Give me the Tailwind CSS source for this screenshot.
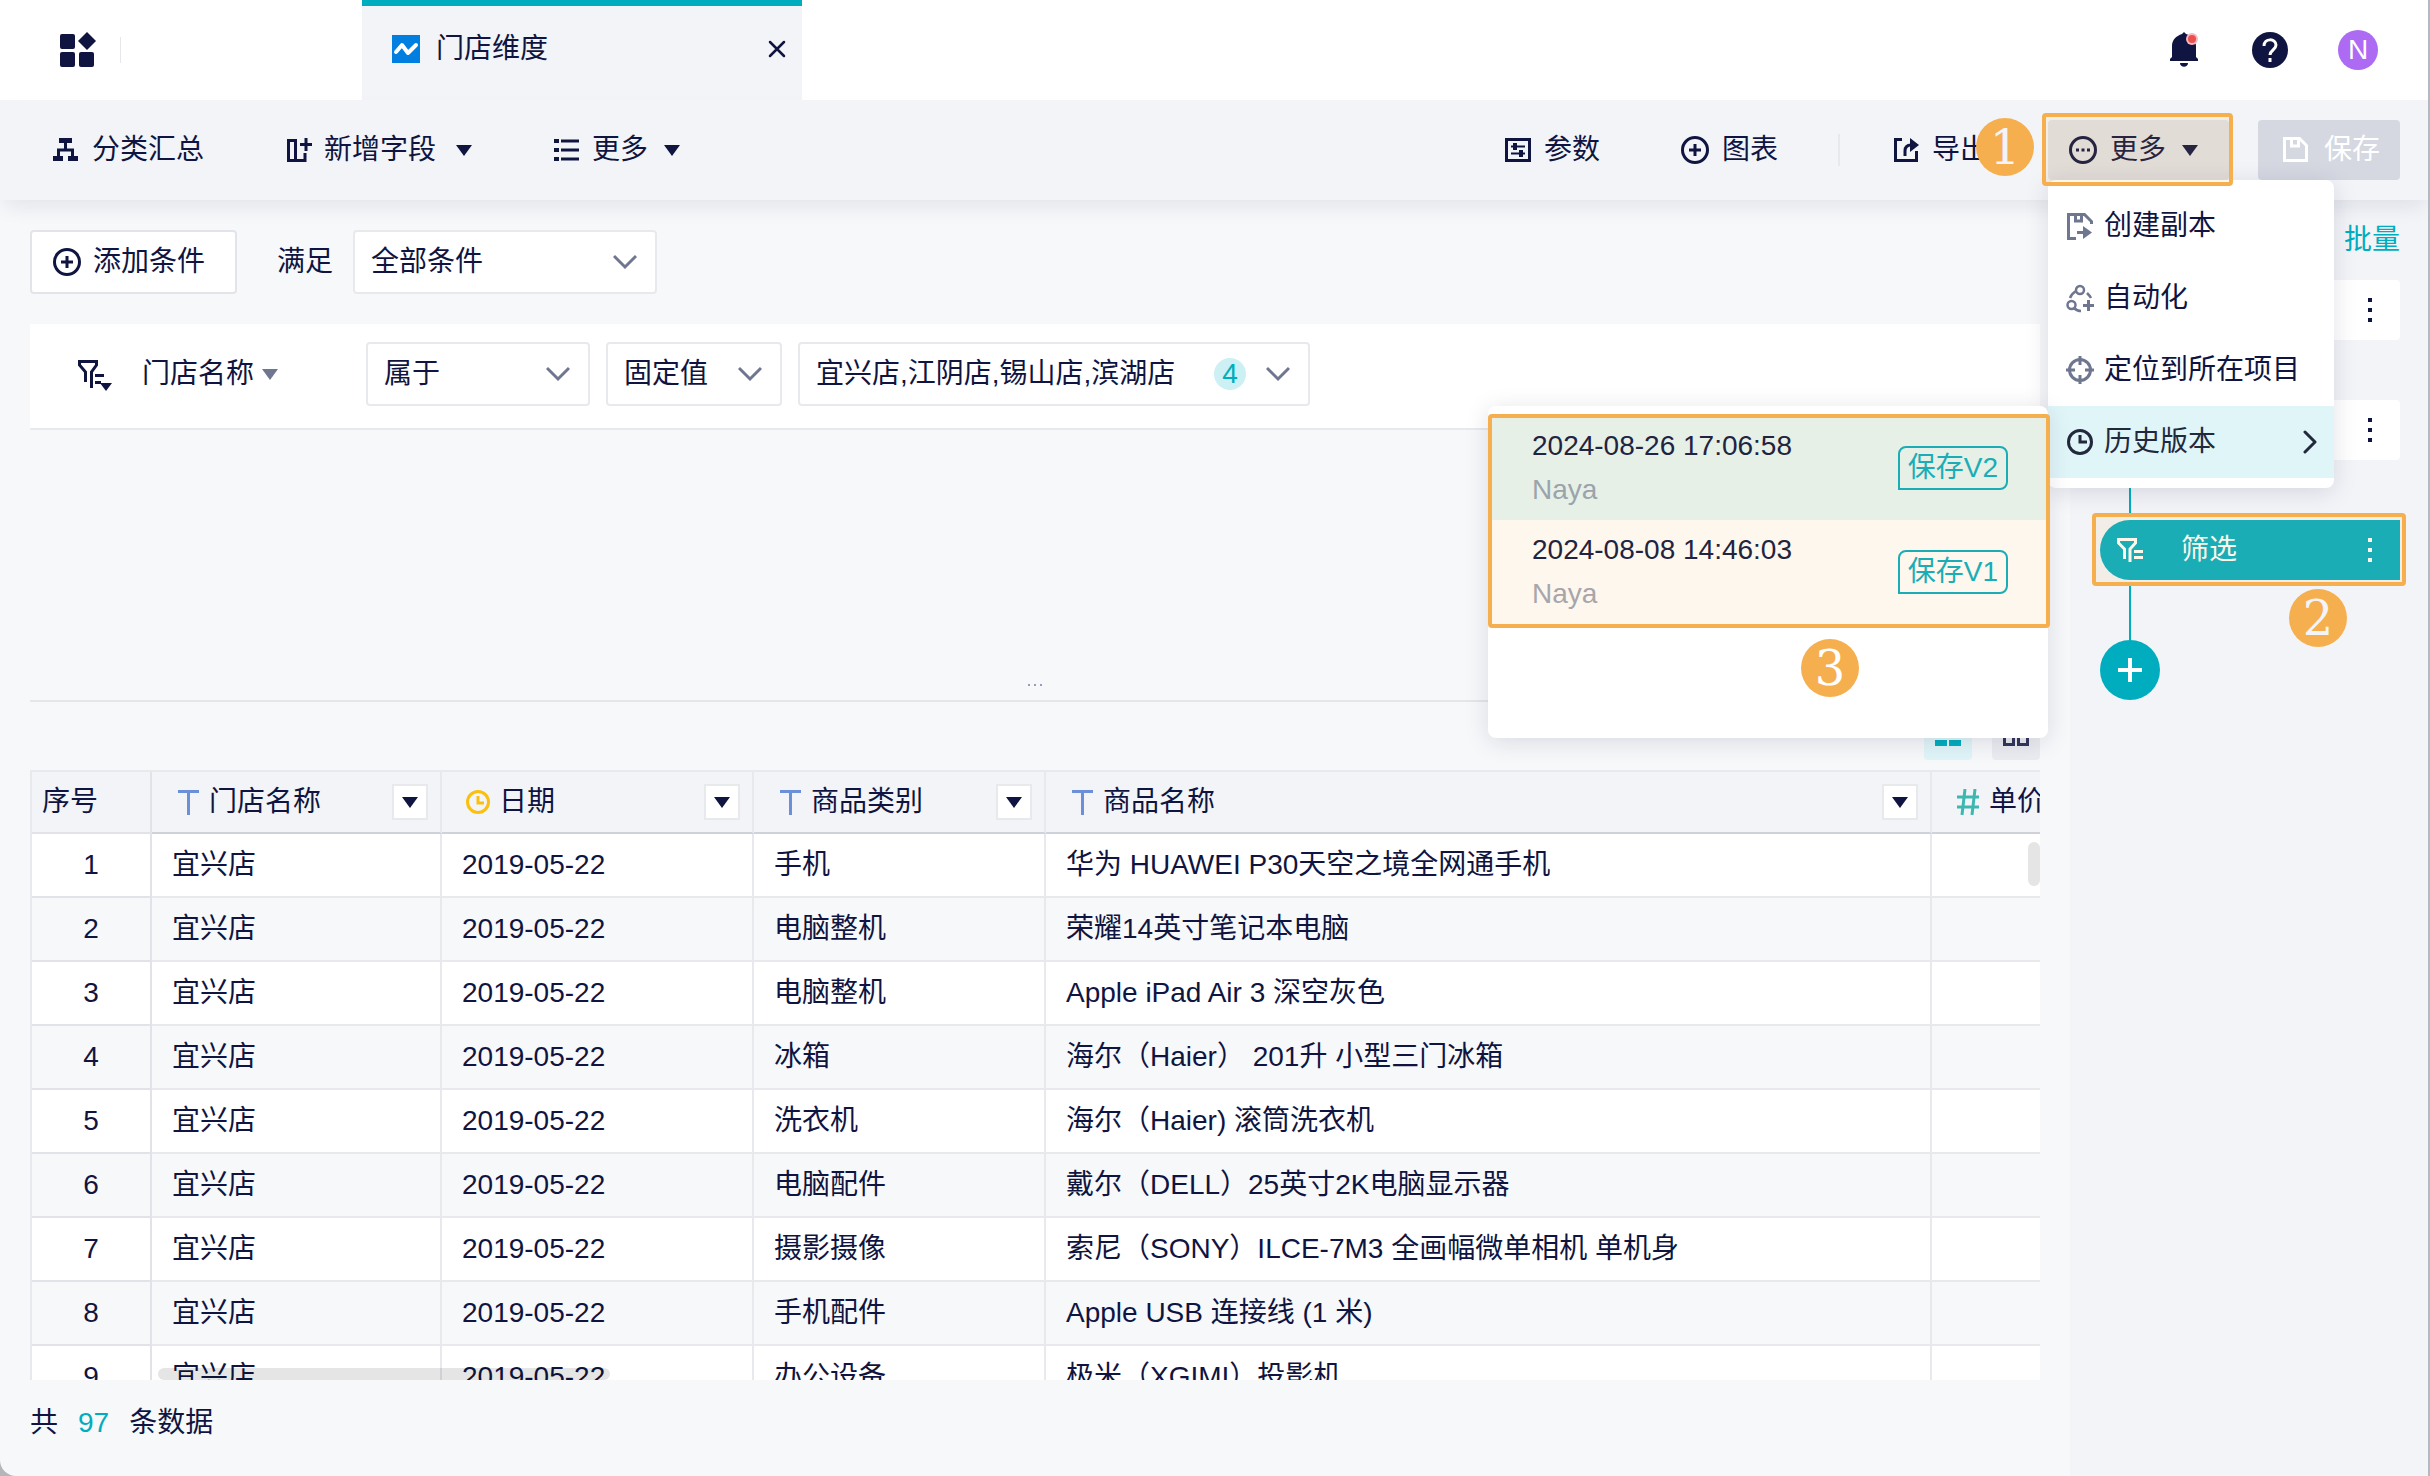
<!DOCTYPE html>
<html lang="zh-CN">
<head>
  <meta charset="UTF-8">
  <meta name="viewport" content="width=device-width, initial-scale=1.0">
  <title>门店维度</title>
  <script src="https://cdn.jsdelivr.net/npm/@tailwindcss/browser@4"></script>
</head>
<body class="bg-[#b4b6ba]">
<div class="h-screen flex flex-col overflow-hidden rounded-bl-2xl border-r-2 border-[#b4b8c0] bg-[#f7f8fa] font-['Liberation_Sans','Noto_Sans_CJK_SC',sans-serif] text-[28px] leading-10 text-[#0f1540]">

  <!-- top bar -->
  <header class="flex h-[100px] shrink-0 bg-white">
    <div class="flex w-[362px] items-center pl-[60px]">
      <button aria-label="应用">
        <svg class="h-9 w-9" viewBox="0 0 36 36" fill="currentColor">
          <rect x="0" y="2" width="15" height="15" rx="2"/>
          <rect x="0" y="20" width="15" height="15" rx="2"/>
          <rect x="19" y="20" width="15" height="15" rx="2"/>
          <path d="M27 0l9 9-9 9-9-9z"/>
        </svg>
      </button>
      <span class="ml-6 h-[26px] w-px bg-[#e6e7ea]"></span>
    </div>
    <div class="flex w-[440px] items-center border-t-[6px] border-[#00adbe] bg-[#f2f4f8] pr-4 pl-[30px] pb-2">
      <svg class="h-7 w-7" viewBox="0 0 28 28">
        <rect width="28" height="28" fill="#007fe0"/>
        <path d="M4 17l6-7 6 8 8-8" fill="none" stroke="#fff" stroke-width="4" stroke-linecap="round" stroke-linejoin="round"/>
      </svg>
      <span class="ml-4 flex-1">门店维度</span>
      <button aria-label="关闭">
        <svg class="h-[18px] w-[18px]" viewBox="0 0 18 18" fill="none" stroke="currentColor" stroke-width="2.500" stroke-linecap="round"><path d="M2 2l14 14M16 2L2 16"/></svg>
      </button>
    </div>
    <div class="ml-auto flex items-center gap-[50px] pr-[50px]">
      <button aria-label="消息">
        <svg class="h-9 w-8" viewBox="0 0 32 36">
          <path d="M14 0l2 2c6 2 10 6 10 12v11l2 2v2H0v-2l2-2V14C2 8 6 4 12 2z" fill="#0f1540"/>
          <path d="M10 31h8c0 5-8 5-8 0z" fill="#0f1540"/>
          <circle cx="22" cy="7" r="6" fill="#f9b9bb"/>
          <circle cx="22" cy="7" r="4" fill="#eb5050"/>
        </svg>
      </button>
      <button aria-label="帮助" class="flex h-9 w-9 items-center justify-center rounded-full bg-[#0f1540] text-white">
        <svg class="h-6 w-6" viewBox="0 0 24 24" fill="none" stroke="currentColor" stroke-width="3"><path d="M6 8c0-8 12-8 12-1 0 5-6 5-6 10M12 20v4"/></svg>
      </button>
      <button class="flex h-10 w-10 items-center justify-center rounded-full bg-[#ac6bf2] text-white">N</button>
    </div>
  </header>

  <!-- toolbar -->
  <nav class="relative z-10 flex h-[100px] shrink-0 items-center bg-[#f2f4f8] pr-7 pl-[52px] shadow-[0_10px_20px_-4px_rgba(20,25,60,0.09)]">
    <button class="flex items-center gap-3">
      <svg class="h-7 w-7" viewBox="0 0 28 28" fill="none" stroke="currentColor" stroke-width="3"><path d="M7 4.500h13" stroke-width="5"/><path d="M13.500 5v9M6.500 20v-6h14v6"/><path d="M1 22.500h10M16 22.500h10" stroke-width="5"/></svg>
      分类汇总
    </button>
    <button class="ml-20 flex items-center gap-3">
      <svg class="h-7 w-7" viewBox="0 0 28 28" fill="none" stroke="currentColor" stroke-width="3"><rect x="4.500" y="4.500" width="7" height="20"/><path d="M11 24.500h10V17M16 8.500h12M22 2v13"/></svg>
      新增字段
      <svg class="ml-2 h-4 w-4" viewBox="0 0 16 16" fill="currentColor"><path d="M0 3h16l-8 11z"/></svg>
    </button>
    <button class="ml-20 flex items-center gap-3">
      <svg class="h-7 w-7" viewBox="0 0 28 28" fill="none" stroke="currentColor" stroke-width="3"><path d="M9 5h18M9 14h18M9 23h18"/><path d="M2 5h5M2 14h5M2 23h5" stroke-width="4"/></svg>
      更多
      <svg class="ml-1 h-4 w-4" viewBox="0 0 16 16" fill="currentColor"><path d="M0 3h16l-8 11z"/></svg>
    </button>

    <div class="ml-auto flex items-center">
      <button class="flex items-center gap-3">
        <svg class="h-7 w-7" viewBox="0 0 28 28" fill="none" stroke="currentColor" stroke-width="3"><rect x="2.500" y="3.500" width="23" height="21"/><path d="M7 10.500h14M7 17.500h14" stroke-width="2"/><path d="M11 7v7M17 14v7" stroke-width="4"/></svg>
        参数
      </button>
      <button class="ml-20 flex items-center gap-3">
        <svg class="h-[30px] w-[30px]" viewBox="0 0 30 30" fill="none" stroke="currentColor" stroke-width="3"><circle cx="15" cy="15" r="12.500"/><path d="M15 9v12M9 15h12"/></svg>
        图表
      </button>
      <span class="ml-[60px] h-8 w-0.5 bg-[#e8e9ed]"></span>
      <button class="ml-[52px] flex items-center gap-3">
        <svg class="h-7 w-7" viewBox="0 0 28 28" fill="none" stroke="currentColor" stroke-width="3"><path d="M10 3.500H3.500v21h21V15"/><path d="M13 20v-5c0-4 2-6 6-6h2"/><path d="M18 2l9 7-9 7z" fill="currentColor" stroke="none"/></svg>
        导出
      </button>

      <div class="relative ml-[60px]">
        <button class="flex h-[60px] w-[181px] items-center gap-3 rounded bg-[#dfe1e6] pl-5">
          <svg class="h-[30px] w-[30px]" viewBox="0 0 30 30" fill="none" stroke="currentColor" stroke-width="3"><circle cx="15" cy="15" r="12.500"/><path d="M8 15h3M13.500 15h3M19 15h3"/></svg>
          更多
          <svg class="ml-1 h-4 w-4" viewBox="0 0 16 16" fill="currentColor"><path d="M0 3h16l-8 11z"/></svg>
        </button>

        <!-- more menu -->
        <ul class="absolute top-full left-0 w-[286px] rounded-lg bg-white py-[10px] shadow-[0_4px_24px_rgba(20,25,60,0.13)]">
          <li><button class="flex h-[72px] w-full items-center gap-2 pl-4">
            <svg class="h-8 w-8 text-[#6f7690]" viewBox="0 0 32 32" fill="none" stroke="currentColor" stroke-width="3"><path d="M12 28.500H4.500v-24h16l7 7V14"/><path d="M11.500 5v6h6V5"/><path d="M13 22.500h8"/><path d="M19 16l9 6.500-9 6.500z" fill="currentColor" stroke="none"/></svg>
            创建副本
          </button></li>
          <li><button class="flex h-[72px] w-full items-center gap-2 pl-4">
            <svg class="h-8 w-8 text-[#6f7690]" viewBox="0 0 32 32" fill="none" stroke="currentColor" stroke-width="2.500"><circle cx="16" cy="8" r="4"/><circle cx="7.500" cy="23" r="4"/><path d="M12 9c-3 2-5 4-6 7M23 11c2 2 3 3 4 5M10 26c2 2 4 3 7 3"/><path d="M24.500 18v11M19 23.500h11" stroke-width="3"/></svg>
            自动化
          </button></li>
          <li><button class="flex h-[72px] w-full items-center gap-2 pl-4">
            <svg class="h-8 w-8 text-[#6f7690]" viewBox="0 0 32 32" fill="none" stroke="currentColor" stroke-width="3"><circle cx="16" cy="16" r="10.500"/><path d="M16 2v9M16 21v9M2 16h9M21 16h9"/></svg>
            定位到所在项目
          </button></li>
          <li class="relative">
            <button class="flex h-[72px] w-full items-center gap-2 bg-[#e0f5f8] pr-4 pl-4 text-[#22293c]">
              <svg class="h-8 w-8" viewBox="0 0 32 32" fill="none" stroke="currentColor" stroke-width="3"><circle cx="16" cy="16" r="11.500"/><path d="M16 9v7h7"/></svg>
              历史版本
              <svg class="ml-auto h-6 w-4" viewBox="0 0 16 24" fill="none" stroke="currentColor" stroke-width="3" stroke-linecap="round" stroke-linejoin="round"><path d="M3 2l10 10L3 22"/></svg>
            </button>

            <!-- saved versions -->
            <div class="absolute top-0 right-full h-[332px] w-[560px] rounded-lg bg-white pt-[10px] shadow-[0_4px_24px_rgba(20,25,60,0.13)]">
              <ul>
                <li class="flex h-[104px] items-center justify-between bg-[#e6f0e7] pr-10 pl-11">
                  <div class="leading-[44px]"><p class="text-[#22233f]">2024-08-26 17:06:58</p><p class="text-[#9ba3ab]">Naya</p></div>
                  <span class="rounded-lg rounded-bl-none border-2 border-[#1aadb5] px-2 text-[#1aadb5]">保存V2</span>
                </li>
                <li class="flex h-[104px] items-center justify-between bg-[#fef7ee] pr-10 pl-11">
                  <div class="leading-[44px]"><p class="text-[#22233f]">2024-08-08 14:46:03</p><p class="text-[#a8a5ab]">Naya</p></div>
                  <span class="rounded-lg rounded-bl-none border-2 border-[#1aadb5] px-2 text-[#1aadb5]">保存V1</span>
                </li>
              </ul>
              <div class="pointer-events-none absolute top-2 left-0 h-[214px] w-[562px] rounded border-4 border-[#f5af4f]"></div>
              <span class="absolute top-[233px] left-[313px] flex h-[58px] w-[58px] items-center justify-center rounded-full bg-[#f5af4f] font-['DejaVu_Serif',serif] text-[48px] text-white">3</span>
            </div>
          </li>
        </ul>

        <div class="pointer-events-none absolute -top-[7px] -left-[6px] h-[73px] w-[191px] rounded border-4 border-[#f5af4f] bg-[#f5af4f]/10"></div>
        <span class="absolute -top-[2px] -left-[72px] flex h-[58px] w-[58px] items-center justify-center rounded-full bg-[#f5af4f] font-['DejaVu_Serif',serif] text-[48px] text-[#f2f4f8]">1</span>
      </div>

      <button class="ml-[29px] flex h-[60px] w-[142px] items-center gap-[14px] rounded bg-[#d5d8e1] pl-6 text-white">
        <svg class="h-7 w-7" viewBox="0 0 28 28" fill="none" stroke="currentColor" stroke-width="3"><path d="M2.500 2.500h15l7 7v15h-22z"/><path d="M9.500 4v6h7V4"/></svg>
        保存
      </button>
    </div>
  </nav>

  <div class="flex min-h-0 flex-1">
    <main class="flex min-w-0 flex-1 flex-col px-[30px] pt-[30px]">
      <!-- conditions -->
      <div class="flex shrink-0 items-center">
        <button class="flex h-16 items-center gap-[11px] rounded border-2 border-[#e2e4e9] bg-white pr-[30px] pl-5">
          <svg class="h-[30px] w-[30px]" viewBox="0 0 30 30" fill="none" stroke="currentColor" stroke-width="3"><circle cx="15" cy="15" r="12.500"/><path d="M15 9v12M9 15h12"/></svg>
          添加条件
        </button>
        <label for="match" class="ml-10">满足</label>
        <div class="relative ml-5">
          <select id="match" class="h-16 w-[304px] appearance-none rounded border-2 border-[#e8e9ec] bg-white pl-4"><option>全部条件</option><option>任一条件</option></select>
          <svg class="pointer-events-none absolute top-5 right-5 h-6 w-6" viewBox="0 0 24 24" fill="none" stroke="#6f7690" stroke-width="3"><path d="M1 6l11 11L23 6"/></svg>
        </div>
      </div>

      <div class="mt-[30px] flex h-[106px] shrink-0 items-center border-b-2 border-[#e8e9ec] bg-white pb-1 pl-[46px]">
        <svg class="h-9 w-9" viewBox="0 0 36 36" fill="none" stroke="currentColor" stroke-width="3"><path d="M9.500 26V16L3.500 9V5.500h17V9L15.500 16v16"/><path d="M19 19.500h9M19 26.500h6"/><path d="M24 27h12l-6 8z" fill="currentColor" stroke="none"/></svg>
        <button class="ml-[30px] flex items-center gap-2">门店名称
          <svg class="h-4 w-4 text-[#6f7690]" viewBox="0 0 16 16" fill="currentColor"><path d="M0 3h16l-8 11z"/></svg>
        </button>
        <div class="relative ml-[88px]">
          <select aria-label="运算符" class="h-16 w-[224px] appearance-none rounded border-2 border-[#e8e9ec] bg-white pl-4"><option>属于</option><option>不属于</option></select>
          <svg class="pointer-events-none absolute top-5 right-5 h-6 w-6" viewBox="0 0 24 24" fill="none" stroke="#6f7690" stroke-width="3"><path d="M1 6l11 11L23 6"/></svg>
        </div>
        <div class="relative ml-4">
          <select aria-label="值类型" class="h-16 w-[176px] appearance-none rounded border-2 border-[#e8e9ec] bg-white pl-4"><option>固定值</option></select>
          <svg class="pointer-events-none absolute top-5 right-5 h-6 w-6" viewBox="0 0 24 24" fill="none" stroke="#6f7690" stroke-width="3"><path d="M1 6l11 11L23 6"/></svg>
        </div>
        <button class="ml-4 flex h-16 w-[512px] items-center rounded border-2 border-[#e8e9ec] bg-white pr-[18px] pl-4">
          宜兴店,江阴店,锡山店,滨湖店
          <span class="ml-auto flex h-8 w-8 items-center justify-center rounded-full bg-[#ccf0f3] text-[#00adbe]">4</span>
          <svg class="ml-5 h-6 w-6" viewBox="0 0 24 24" fill="none" stroke="#6f7690" stroke-width="3"><path d="M1 6l11 11L23 6"/></svg>
        </button>
      </div>

      <!-- drag handle -->
      <div class="flex h-[272px] shrink-0 items-end justify-center gap-1 border-b-2 border-[#e4e6e9] pb-[14px]">
        <i class="h-0.5 w-0.5 bg-[#9a9db8]"></i><i class="h-0.5 w-0.5 bg-[#9a9db8]"></i><i class="h-0.5 w-0.5 bg-[#9a9db8]"></i>
      </div>

      <div class="mt-[10px] flex shrink-0 justify-end gap-5">
        <button aria-label="表格视图" class="flex h-12 w-12 items-center justify-center rounded bg-[#e0f5f8] text-[#00adbe]">
          <svg class="h-6 w-7" viewBox="0 0 28 24" fill="currentColor"><path d="M1 0h26v6H1zM1 9h12v5H1zM15 9h12v5H15zM1 16h12v6H1zM15 16h12v6H15z"/></svg>
        </button>
        <button aria-label="卡片视图" class="flex h-12 w-12 items-center justify-center rounded bg-[#ebecf1] text-[#33365c]">
          <svg class="h-6 w-7" viewBox="0 0 28 24" fill="none" stroke="currentColor" stroke-width="3"><path d="M2.500 1.500h9v7h-9zM16.500 1.500h9v7h-9zM2.500 12.500h9v8h-9zM16.500 12.500h9v8h-9z"/></svg>
        </button>
      </div>

      <!-- data table -->
      <div class="relative mt-[10px] min-h-0 flex-1 overflow-hidden">
        <table class="w-[2200px] table-fixed border-separate border-spacing-0 border-t-2 border-l-2 border-[#e8e9ec]">
          <colgroup><col class="w-[120px]"><col class="w-[290px]"><col class="w-[312px]"><col class="w-[292px]"><col class="w-[886px]"><col></colgroup>
          <thead id="head" class="bg-[#f2f4f8] text-left"></thead>
          <tbody id="rows"></tbody>
        </table>
        <div class="absolute top-[72px] right-0 h-11 w-3 rounded-full bg-black/10"></div>
        <div class="absolute bottom-0 left-32 h-3 w-[452px] rounded-full bg-black/10"></div>
      </div>

      <footer class="flex h-24 shrink-0 items-center gap-5 pb-[10px]">共 <span class="text-[#00adbe]">97</span> 条数据</footer>
    </main>

    <!-- steps -->
    <aside class="flex w-[358px] shrink-0 flex-col bg-[#f2f4f8] pt-5 pr-7 pl-[30px]">
      <a href="#" class="self-end text-[#00adbe]">批量</a>
      <div class="mt-5 flex h-[60px] items-center justify-end rounded bg-white pr-7">
        <button aria-label="操作" class="flex flex-col gap-[6px]"><i class="h-1 w-1 bg-current"></i><i class="h-1 w-1 bg-current"></i><i class="h-1 w-1 bg-current"></i></button>
      </div>
      <span class="ml-[29px] h-[60px] w-0.5 bg-[#00adbe]"></span>
      <div class="flex h-[60px] items-center justify-end rounded bg-white pr-7">
        <button aria-label="操作" class="flex flex-col gap-[6px]"><i class="h-1 w-1 bg-current"></i><i class="h-1 w-1 bg-current"></i><i class="h-1 w-1 bg-current"></i></button>
      </div>
      <span class="ml-[29px] h-[60px] w-0.5 bg-[#00adbe]"></span>
      <div class="relative">
        <div class="pointer-events-none absolute -top-[7px] -left-2 h-[73px] w-[314px] rounded border-4 border-[#f5af4f] bg-[#f2ede7]"></div>
        <div class="relative flex h-[60px] items-center rounded-l-full rounded-r bg-[#1aadb5] pr-7 pl-4 text-[#fdf7ea]">
          <svg class="h-7 w-7" viewBox="0 0 28 28" fill="none" stroke="currentColor" stroke-width="3"><path d="M8.500 23V13L2.500 7V3.500h17V7L14 13v13"/><path d="M18 15.500h9M18 21.500h9"/></svg>
          <span class="ml-[37px] flex-1">筛选</span>
          <button aria-label="操作" class="flex flex-col gap-[6px]"><i class="h-1 w-1 bg-current"></i><i class="h-1 w-1 bg-current"></i><i class="h-1 w-1 bg-current"></i></button>
        </div>
        <span class="absolute top-[69px] left-[189px] flex h-[58px] w-[58px] items-center justify-center rounded-full bg-[#f5af4f] font-['DejaVu_Serif',serif] text-[48px] text-[#f2f4f8]">2</span>
      </div>
      <span class="ml-[29px] h-[60px] w-0.5 bg-[#00adbe]"></span>
      <button aria-label="添加步骤" class="flex h-[60px] w-[60px] items-center justify-center rounded-full bg-[#00adbe] text-white">
        <svg class="h-6 w-6" viewBox="0 0 24 24" fill="none" stroke="currentColor" stroke-width="4"><path d="M12 0v24M0 12h24"/></svg>
      </button>
    </aside>
  </div>
</div>

<script>
  const icons = {
    text: '<svg class="h-[26px] w-6 text-[#6b8fd9]" viewBox="0 0 24 26" fill="none" stroke="currentColor" stroke-width="3"><path d="M2 2.500h21M12.500 2v24"/></svg>',
    date: '<svg class="h-6 w-6 text-[#fbbf0e]" viewBox="0 0 24 24" fill="none" stroke="currentColor" stroke-width="3"><circle cx="12" cy="12" r="10.500"/><path d="M12 6v7h6"/></svg>',
    number: '<svg class="h-[26px] w-6 text-[#3db8b0]" viewBox="0 0 24 26" fill="none" stroke="currentColor" stroke-width="3"><path d="M1 8h22M1 18h22M9 0L6 26M19 0l-3 26"/></svg>'
  };

  const columns = [
    ["text", "门店名称"],
    ["date", "日期"],
    ["text", "商品类别"],
    ["text", "商品名称"],
    ["number", "单价"]
  ];

  const goods = [
    ["手机", "华为 HUAWEI P30天空之境全网通手机"],
    ["电脑整机", "荣耀14英寸笔记本电脑"],
    ["电脑整机", "Apple iPad Air 3 深空灰色"],
    ["冰箱", "海尔（Haier） 201升 小型三门冰箱"],
    ["洗衣机", "海尔（Haier) 滚筒洗衣机"],
    ["电脑配件", "戴尔（DELL）25英寸2K电脑显示器"],
    ["摄影摄像", "索尼（SONY）ILCE-7M3 全画幅微单相机 单机身"],
    ["手机配件", "Apple USB 连接线 (1 米)"],
    ["办公设备", "极米（XGIMI）投影机"]
  ];

  document.getElementById("head").innerHTML = `<tr>
    <th class="h-[62px] border-r-2 border-b-2 border-[#e2e3e9] pl-[10px] font-normal">序号</th>
    ${columns.map(([type, name]) => `<th class="h-[62px] border-r-2 border-b-2 border-r-[#e8e9ec] border-b-[#d0d2da] pr-3 pl-6 font-normal">
      <div class="flex items-center gap-[9px]">${icons[type]}<span class="flex-1">${name}</span>
        <button aria-label="筛选${name}" class="flex h-9 w-9 items-center justify-center border-2 border-[#e8e9ec] bg-white"><svg class="h-4 w-4" viewBox="0 0 16 16" fill="currentColor"><path d="M0 3h16l-8 11z"/></svg></button>
      </div></th>`).join("")}
  </tr>`;

  document.getElementById("rows").innerHTML = goods.map(([kind, name], i) => `<tr class="bg-white even:bg-[#f7f8fa]">
    <td class="h-16 border-r-2 border-b-2 border-[#e2e3e9] text-center">${i + 1}</td>
    ${["宜兴店", "2019-05-22", kind, name, ""].map(v => `<td class="h-16 border-r-2 border-b-2 border-[#e8e9ec] pl-5 whitespace-nowrap">${v}</td>`).join("")}
  </tr>`).join("");
</script>
</body>
</html>
